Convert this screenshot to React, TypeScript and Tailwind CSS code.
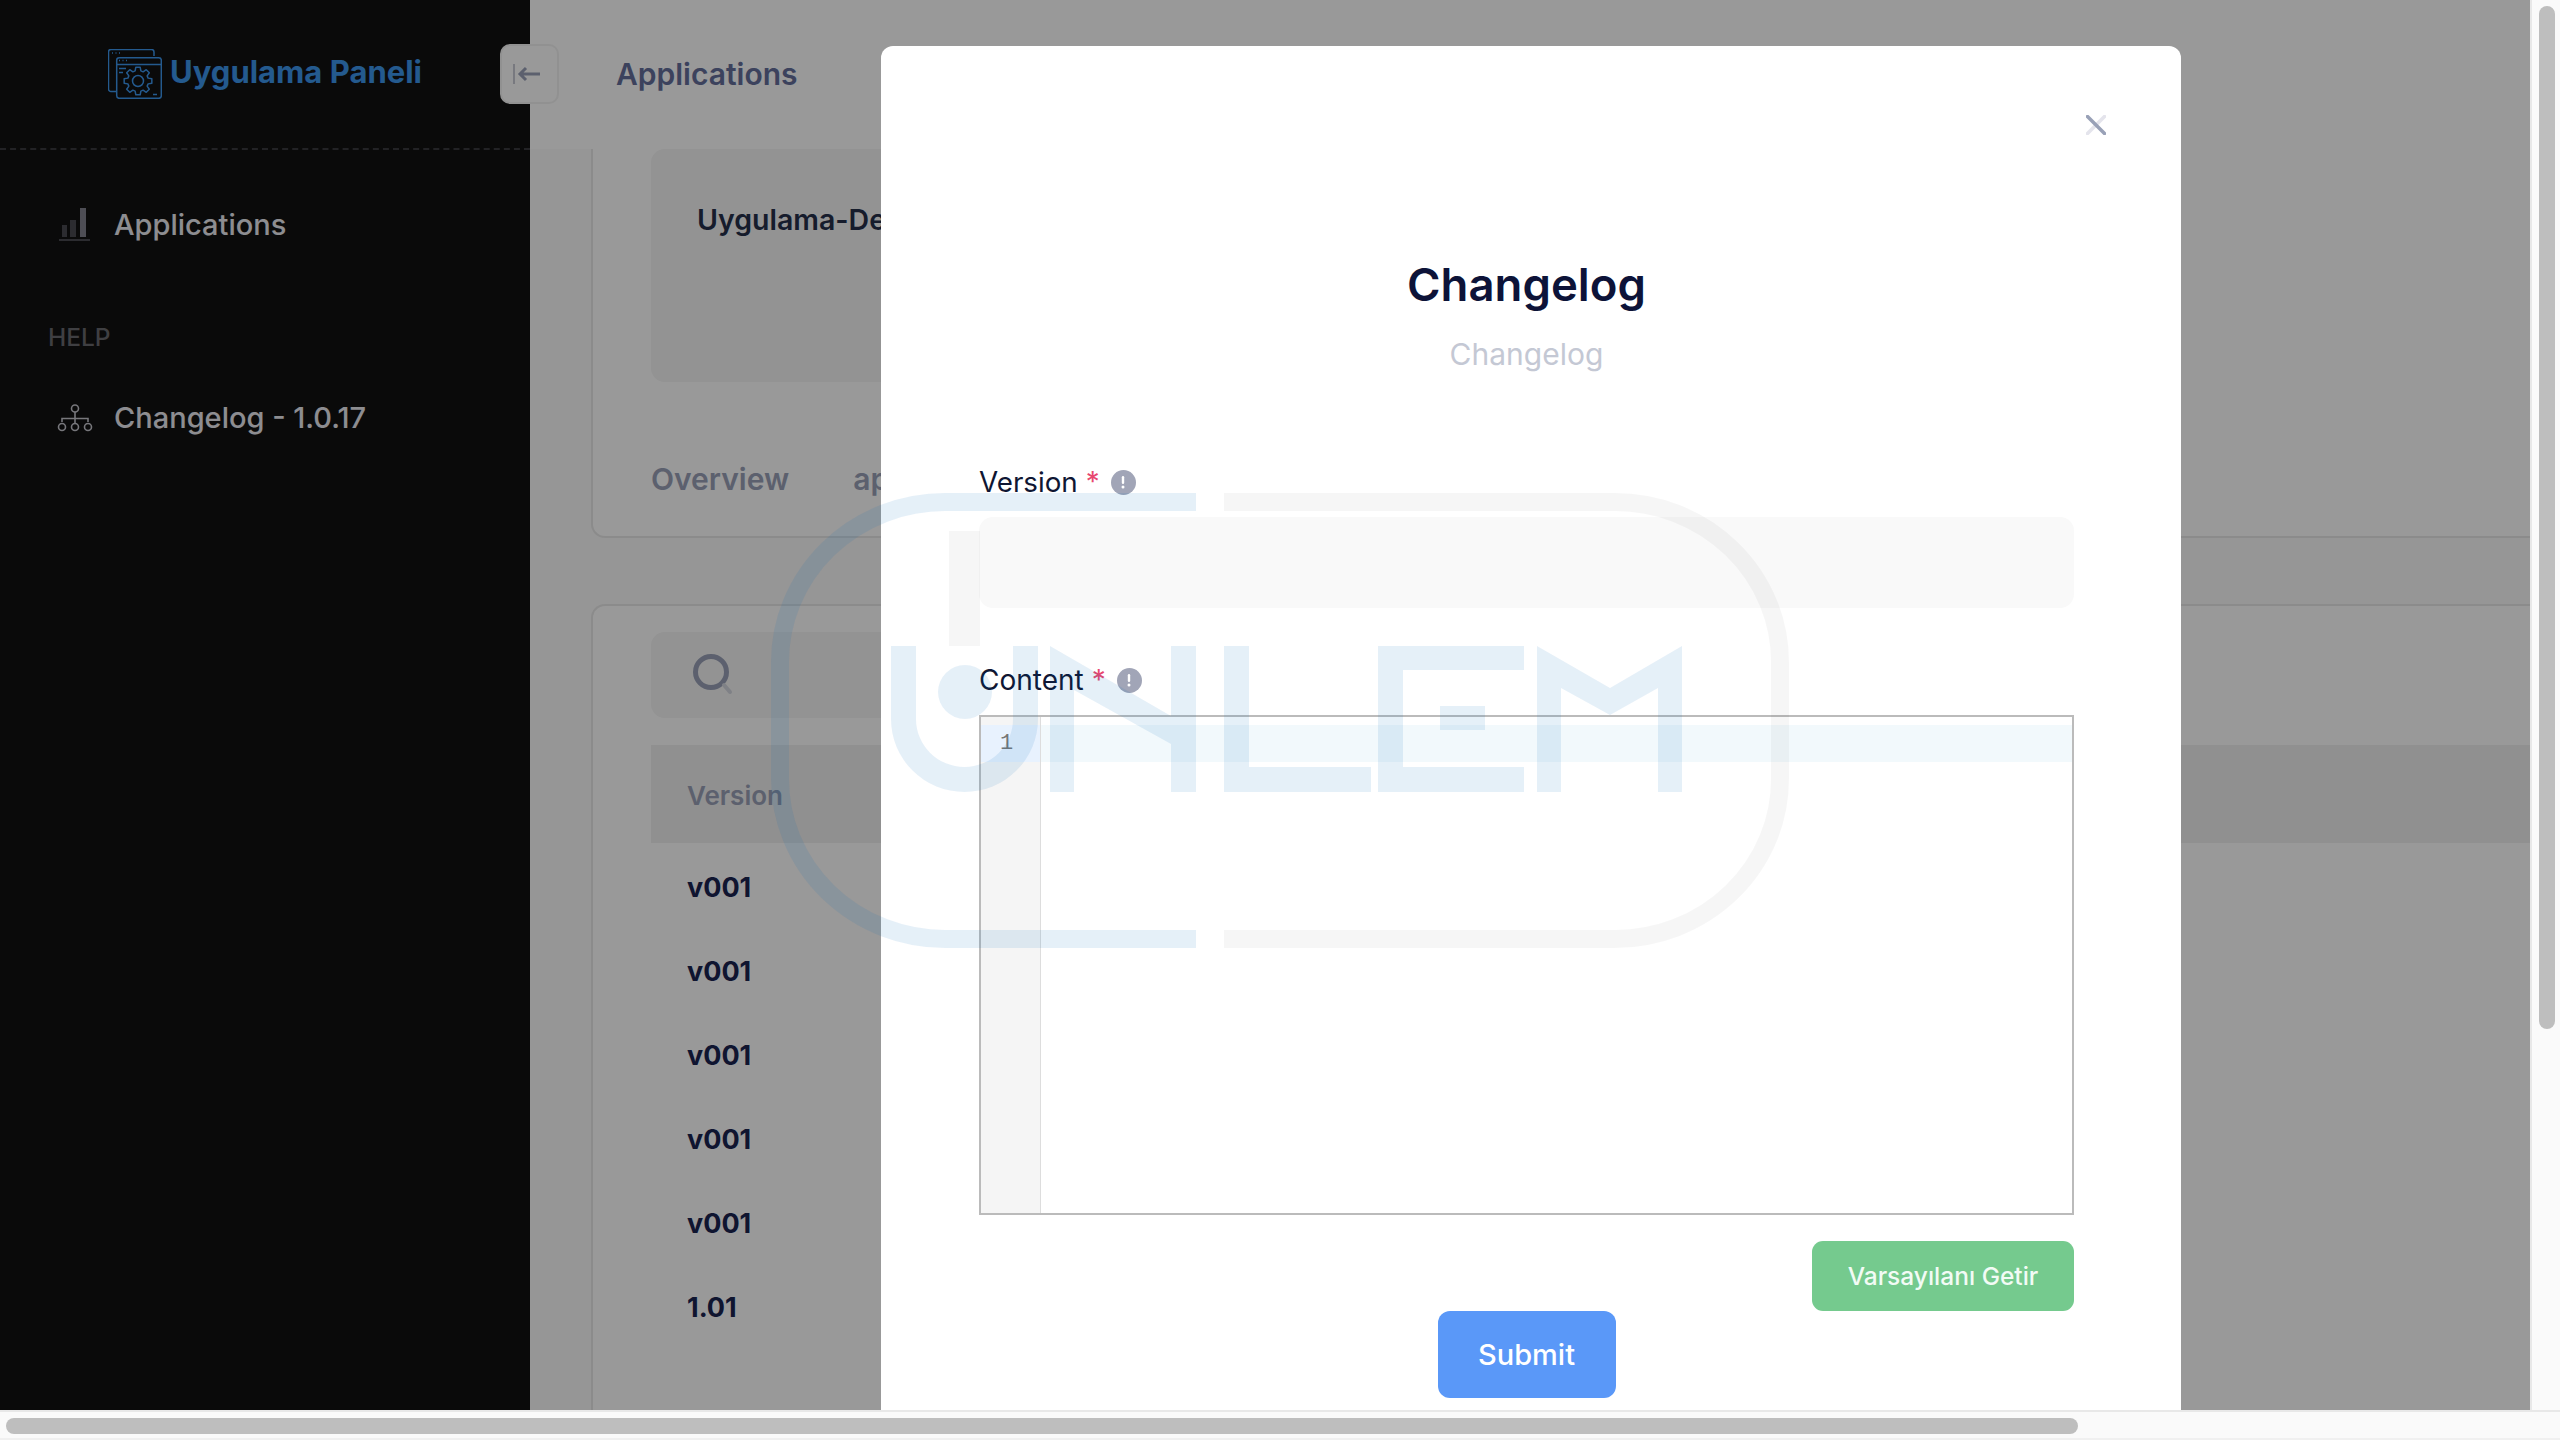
import React from 'react';

const rows = ['v001', 'v001', 'v001', 'v001', 'v001', '1.01'];

// cog outline for the logo, teeth computed around the centre
const gearPath = (cx: number, cy: number, outer: number, inner: number, teeth: number) => {
  const pts: string[] = [];
  const step = (Math.PI * 2) / teeth;
  for (let i = 0; i < teeth; i++) {
    const a = i * step - Math.PI / 2;
    const offs: [number, number][] = [
      [-0.32, inner],
      [-0.18, outer],
      [0.18, outer],
      [0.32, inner],
    ];
    offs.forEach(([o, r]) => {
      const t = a + o * step * 1.1;
      pts.push(`${(cx + Math.cos(t) * r).toFixed(2)} ${(cy + Math.sin(t) * r).toFixed(2)}`);
    });
  }
  return `M${pts.join('L')}Z`;
};

const Logo = () => (
  <svg width="54" height="50" viewBox="108 49 54 50" fill="none" stroke="#3c96ed" strokeWidth="1.5" className="shrink-0">
    <path d="M154 56v-4a2.5 2.5 0 0 0-2.5-2.5h-40.5a2.5 2.5 0 0 0-2.5 2.5v37a2.5 2.5 0 0 0 2.5 2.5h5" />
    <rect x="116.7" y="57.7" width="44.6" height="40.6" rx="2.5" />
    <path d="M117 64.5h44M119 68.5h7M119 72.5h4M153 94.5h4" />
    <path d="M112 53h1M115.5 53h1M119 53h1M119 60.5h1M122.500 60.500h1M126 60.500h1" strokeWidth="1.6" />
    <path d={gearPath(138, 81, 14, 10.5, 8)} strokeLinejoin="round" />
    <circle cx="138" cy="81" r="5.5" />
  </svg>
);

const InfoDot = () => (
  <span className="ml-[3px] flex h-[25px] w-[25px] shrink-0 items-center justify-center rounded-full bg-[#a1a5b7]">
    <svg width="4" height="13" viewBox="0 0 4 13" fill="#fff">
      <rect x="0.8" y="0" width="2.4" height="8" rx="1.2" />
      <circle cx="2" cy="11" r="1.5" />
    </svg>
  </span>
);

const Sidebar = () => (
  <aside className="flex h-full w-[530px] shrink-0 flex-col bg-[#111111]">
    <div className="flex h-[150px] shrink-0 items-start border-b-2 border-dashed border-[#3a3a3e] pl-[108px] pt-[49px]">
      <Logo />
      <span className="ml-[8px] mt-[3px] text-[31px] font-bold leading-[40px] text-[#3c96ed]">Uygulama Paneli</span>
    </div>
    <div className="flex h-[148px] items-start pl-[59px] pt-[58px]">
      <svg width="32" height="34" viewBox="0 0 32 34" className="shrink-0">
        <rect x="3" y="17" width="5" height="12" fill="#4a4a50" />
        <rect x="11" y="12" width="6" height="17" fill="#4a4a50" />
        <rect x="21" y="0" width="6" height="29" fill="#82828e" />
        <rect x="0" y="31" width="31" height="2" fill="#4a4a50" />
      </svg>
      <span className="ml-[23px] text-[29px] font-medium leading-[34px] text-[#ececf2]">Applications</span>
    </div>
    <div className="pl-[48px] pt-[24px] text-[24.500px] font-medium leading-[31px] text-[#69696f]">HELP</div>
    <div className="flex items-center pl-[57px] pt-[48px]">
      <svg width="36" height="28" viewBox="0 0 36 28" fill="none" stroke="#c6c6ce" strokeWidth="1.6" className="shrink-0">
        <circle cx="18" cy="4.500" r="3.500" />
        <path d="M18 8v6M5 18v-3.500h26V18M18 14.500V19" />
        <circle cx="5" cy="23" r="3.500" />
        <circle cx="18" cy="23" r="3.500" />
        <circle cx="31" cy="23" r="3.500" />
      </svg>
      <span className="ml-[21px] text-[29px] font-medium leading-[34px] text-[#ececf2]">Changelog - 1.0.17</span>
    </div>
  </aside>
);

const MainContent = () => (
  <main className="min-w-0 flex-1 overflow-hidden bg-[#fafafa]">
    <div className="flex h-[149px] items-center bg-white pl-[86px]">
      <span className="text-[30px] font-semibold text-[#646f9c]">Applications</span>
    </div>
    <div className="w-[2400px] pl-[61px]">
      <div className="h-[389px] rounded-b-[14px] border-b-2 border-l-2 border-[#e8e8e8] bg-white pl-[58px]">
        <div className="h-[233px] w-[1300px] rounded-[14px] bg-[#f5f5f5] pl-[46px] pt-[50px]">
          <span className="text-[28.500px] font-semibold leading-[42px] text-[#252f4a]">Uygulama-De</span>
        </div>
        <div className="mt-[77px] flex gap-[64px] text-[30px] font-semibold leading-[40px] text-[#99a1b7]">
          <span>Overview</span>
          <span>ap</span>
        </div>
      </div>
      <div className="mt-[66px] h-[900px] rounded-t-[14px] border-l-2 border-t-2 border-[#e8e8e8] bg-white pl-[58px] pt-[26px]">
        <div className="flex h-[86px] w-[1300px] items-center rounded-[14px] bg-[#f5f5f5] pl-[42px]">
          <svg width="40" height="42" viewBox="0 0 40 42" fill="none">
            <circle cx="18" cy="18" r="15.500" stroke="#99a1b7" strokeWidth="5" />
            <path d="M31 31l6 7" stroke="#d4d7e0" strokeWidth="4" strokeLinecap="round" />
          </svg>
        </div>
        <div className="mt-[27px] flex h-[98px] items-center bg-[#f0f0f0] pl-[36px]">
          <span className="relative top-[1px] text-[26px] font-semibold text-[#99a1b7]">Version</span>
        </div>
        <div className="pl-[36px] pt-[3px]">
          {rows.map((r, i) => (
            <div key={i} className="flex h-[84px] items-center text-[27px] font-bold text-[#1a2350]">
              {r}
            </div>
          ))}
        </div>
      </div>
    </div>
  </main>
);

const Watermark = () => (
  <svg width="2530" height="1410" viewBox="0 0 2530 1410" className="pointer-events-none absolute left-0 top-0">
    <g fill="none" strokeWidth="18">
      <path d="M1196 502H945A165 160 0 0 0 780 662V779A165 160 0 0 0 945 939H1196" stroke="#0070b8" strokeOpacity="0.1" />
      <path d="M1224 502H1615A165 160 0 0 1 1780 662V779A165 160 0 0 1 1615 939H1224" stroke="#000" strokeOpacity="0.035" />
    </g>
    <rect x="949" y="531" width="31" height="115" fill="#000" fillOpacity="0.035" />
    <g fill="#0070b8" fillOpacity="0.1">
      <ellipse cx="965" cy="692" rx="27" ry="27" />
      <path d="M891 646V719A73.500 73 0 0 0 1038 719V646H1013V719A48.500 48 0 0 1 916 719V646Z" />
      <path d="M1050 646L1171 716V646H1196V792H1171V744L1074 690V792H1050Z" />
      <path d="M1224 646H1249V767H1371V792H1224Z" />
      <path d="M1378 646H1524V670H1403V767H1524V792H1378Z" />
      <rect x="1440" y="706" width="45" height="24" />
      <path d="M1537 646L1610 688L1682 646V792H1658V688L1610 715L1561 688V792H1537Z" />
    </g>
  </svg>
);

const Modal = () => (
  <div className="absolute left-[881px] top-[46px] h-[1500px] w-[1300px] rounded-[12px] bg-white pl-[98px] pr-[107px]">
    <svg width="20" height="20" viewBox="0 0 20 20" fill="none" strokeWidth="3.500" strokeLinecap="round" className="absolute right-[75px] top-[69px]">
      <path d="M18.500 1.500L1.500 18.500" stroke="#e4e4ec" />
      <path d="M1.500 1.500l17 17" stroke="#99a1b7" />
    </svg>
    <h2 className="pt-[209px] text-center text-[45.500px] font-semibold leading-[60px] text-[#0d1338]">Changelog</h2>
    <p className="mt-[20px] text-center text-[30px] leading-[38px] text-[#c4c8d4]">Changelog</p>
    <div className="mt-[89px] flex h-[40px] items-center gap-[8px] text-[27.750px] leading-[40px] text-[#0f1633]">
      <span>Version</span>
      <span className="text-[#e8476f]">*</span>
      <InfoDot />
    </div>
    <div className="mt-[15px] h-[91px] rounded-[14px] bg-[#f9f9f9]" />
    <div className="mt-[52px] flex h-[40px] items-center gap-[8px] text-[28px] leading-[40px] text-[#0f1633]">
      <span>Content</span>
      <span className="text-[#e8476f]">*</span>
      <InfoDot />
    </div>
    <div className="mt-[15px] flex h-[500px] border-2 border-[#bbbbbb]">
      <div className="w-[60px] shrink-0 border-r border-[#dddddd] bg-[#f5f5f5] pt-[8px]">
        <div className="h-[37px] bg-[#e8f2fe] pl-[19px] font-['Liberation_Mono',monospace] text-[22px] leading-[37px] text-[#777777]">
          1
        </div>
      </div>
      <div className="flex-1 pt-[8px]">
        <div className="h-[37px] bg-[#f2f9fc]" />
      </div>
    </div>
    <div className="mt-[26px] flex justify-end">
      <button className="h-[70px] w-[262px] rounded-[11px] bg-[#75ca8e] text-[24.500px] font-medium text-[#f2fbf5]">
        Varsayılanı Getir
      </button>
    </div>
    <div className="flex justify-center">
      <button className="h-[87px] w-[178px] rounded-[12px] bg-[#5a98f8] text-[29px] font-medium text-white">
        Submit
      </button>
    </div>
  </div>
);

export default function App() {
  return (
    <div className="flex h-screen w-screen flex-col overflow-hidden bg-white font-['Inter',sans-serif]">
      <div className="flex min-h-0 flex-1">
        <div className="relative min-w-0 flex-1 overflow-hidden">
          <div className="flex h-full">
            <Sidebar />
            <MainContent />
          </div>
          <button className="absolute left-[500px] top-[44px] flex h-[60px] w-[59px] items-center rounded-[10px] border-2 border-[#f2f2f2] bg-white pl-[11px]">
            <svg width="28" height="22" viewBox="0 0 28 22" fill="none">
              <path d="M1 1v20" stroke="#c8cad4" strokeWidth="2" />
              <path d="M7 11h20M13 5l-6 6 6 6" stroke="#99a1b7" strokeWidth="3" />
            </svg>
          </button>
          <div className="absolute inset-0 bg-black/40" />
          <Modal />
          <Watermark />
        </div>
        {/* vertical scrollbar */}
        <div className="flex w-[30px] shrink-0 justify-center border-l-2 border-[#e8e8e8] bg-[#fafafa] pl-[2px] pt-[6px]">
          <div className="h-[1023px] w-[16px] rounded-full bg-[#bebebe]" />
        </div>
      </div>
      {/* horizontal scrollbar */}
      <div className="flex h-[30px] shrink-0 border-y-2 border-y-[#e8e8e8] border-b-[#f0f0f0] bg-[#fafafa] pl-[6px] pt-[6px]">
        <div className="h-[16px] w-[2072px] rounded-full bg-[#bebebe]" />
      </div>
    </div>
  );
}
